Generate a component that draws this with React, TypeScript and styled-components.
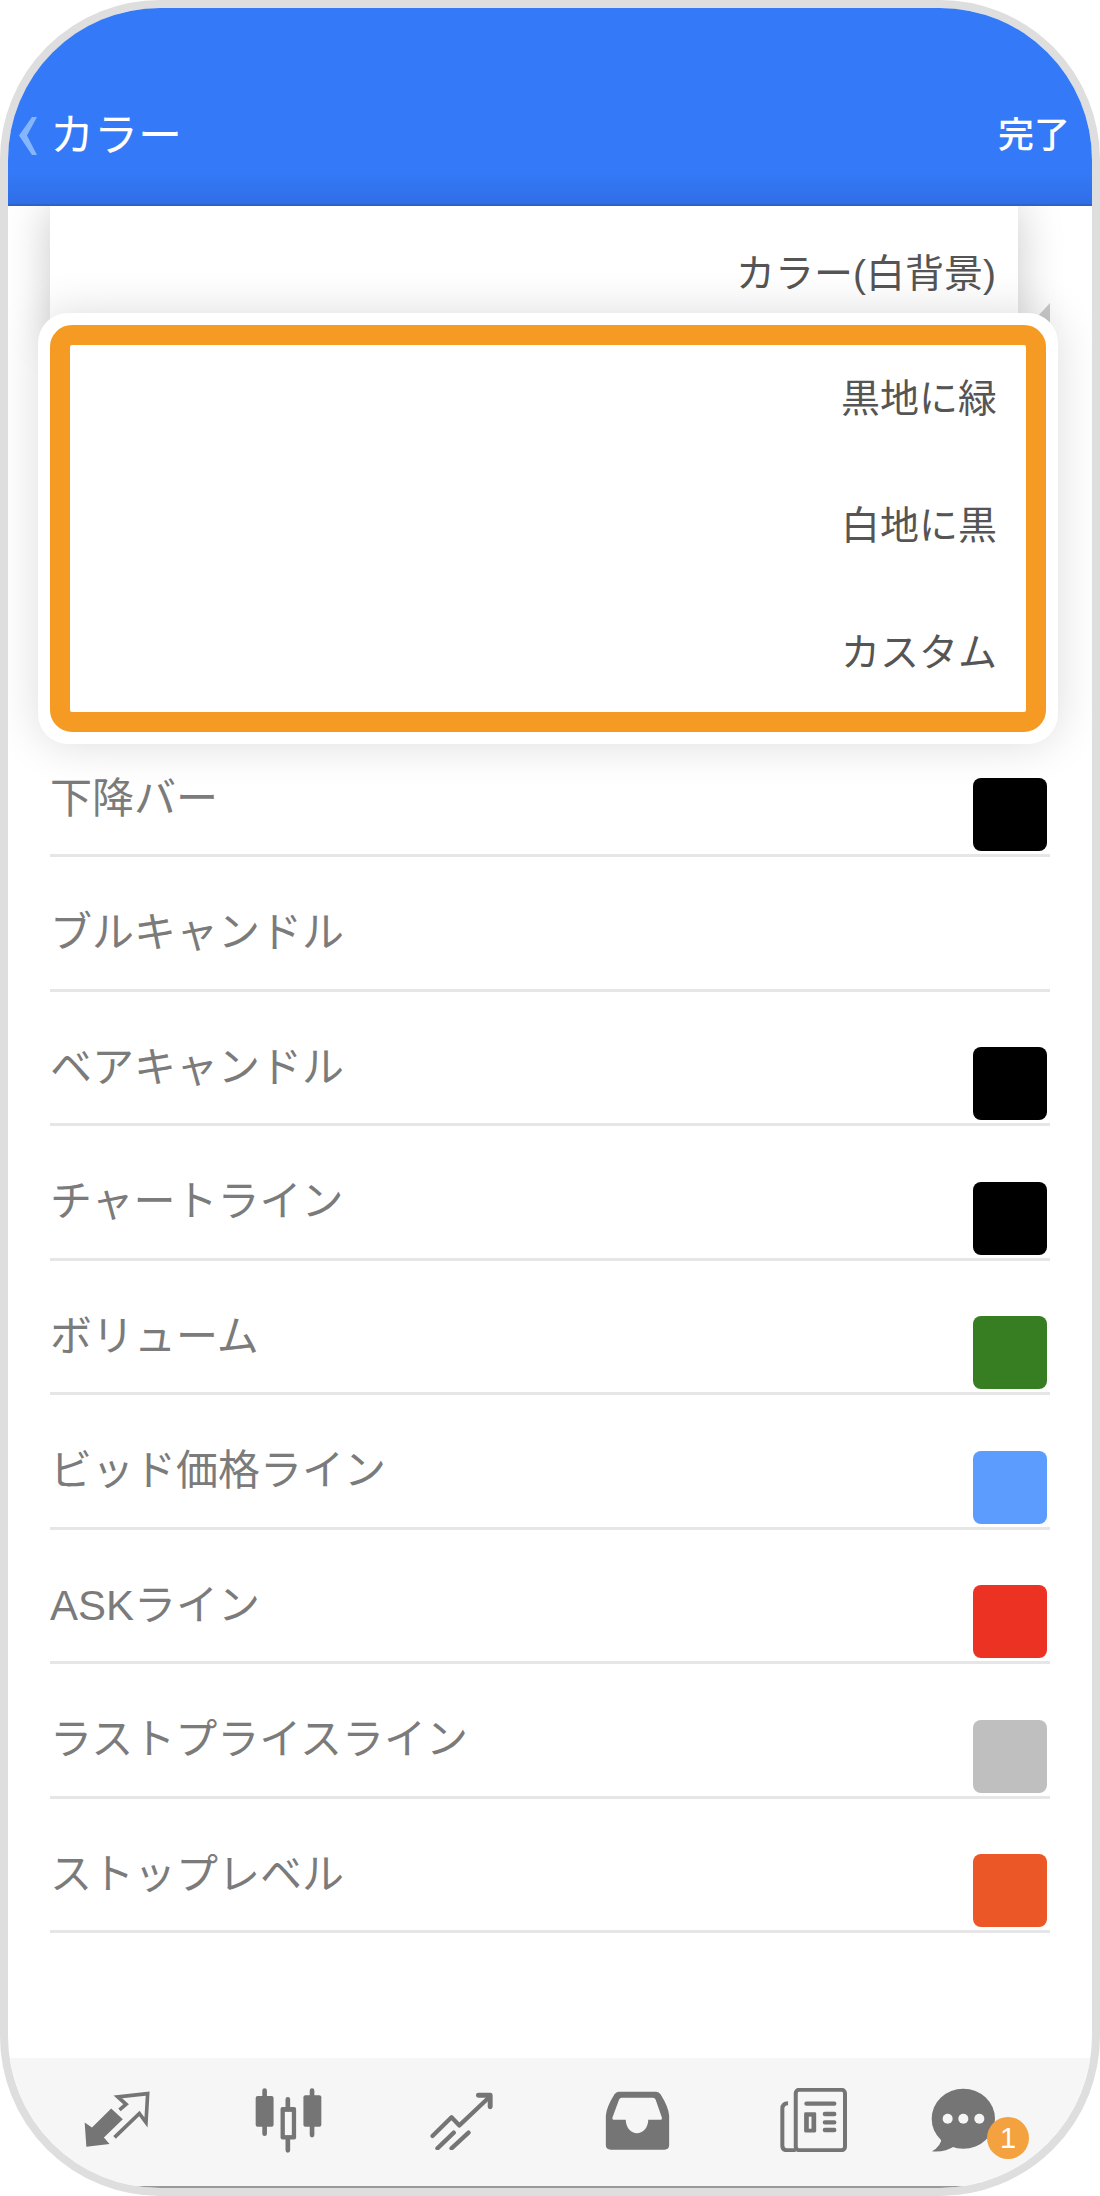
import React from 'react';
import styled, { createGlobalStyle } from 'styled-components';

const GlobalStyle = createGlobalStyle`
  html, body {
    margin: 0;
    padding: 0;
    background: #fff;
  }
  body {
    font-family: "Liberation Sans", "Noto Sans CJK JP", sans-serif;
  }
`;

const Frame = styled.div`
  position: relative;
  box-sizing: border-box;
  width: 1100px;
  height: 2196px;
  border: 8px solid #dedede;
  border-radius: 160px;
  overflow: hidden;
  display: flex;
  flex-direction: column;
  background: #fff;
`;

const Header = styled.header`
  position: relative;
  z-index: 3;
  box-sizing: border-box;
  height: 198px;
  flex: none;
  display: flex;
  align-items: flex-end;
  justify-content: space-between;
  padding: 0 22px 45px 11px;
  background: linear-gradient(#3479f7 0, #3479f7 84%, #306ee6 100%);
  border-bottom: 2px solid #2c62cc;
  color: #fff;
`;

const BackGroup = styled.div`
  display: flex;
  align-items: center;
  gap: 13px;
`;

const Title = styled.h1`
  margin: 0;
  font-size: 44px;
  line-height: 46px;
  font-weight: 400;
`;

const DoneButton = styled.span`
  font-size: 36px;
  line-height: 46px;
  font-weight: 500;
`;

const List = styled.main`
  flex: 1;
  padding: 516.8px 42px 0;
`;

const Row = styled.div`
  box-sizing: border-box;
  height: 134.5px;
  display: flex;
  justify-content: space-between;
  border-bottom: 3px solid #e6e6e6;
`;

const RowLabel = styled.span`
  padding-top: 53px;
  font-size: 42px;
  line-height: 46px;
  color: #7b7b7b;
`;

const Swatch = styled.span<{ $color: string }>`
  align-self: flex-end;
  width: 74px;
  height: 73px;
  margin: 0 3px 3px 0;
  border-radius: 8px;
  background: ${(p) => p.$color};
`;

const TopPanel = styled.div`
  position: absolute;
  z-index: 1;
  top: 198px;
  left: 42px;
  box-sizing: border-box;
  width: 968px;
  height: 130px;
  padding: 46px 22px 0 0;
  border-radius: 0 0 6px 6px;
  background: #fff;
  box-shadow: 0 0 46px rgba(0, 0, 0, 0.22);
  text-align: right;
  font-size: 39px;
  line-height: 44px;
  color: #555;
`;

const ResizeCorner = styled.svg`
  position: absolute;
  z-index: 1;
  top: 295px;
  left: 1029px;
`;

const Popup = styled.div`
  position: absolute;
  z-index: 2;
  top: 305px;
  left: 30px;
  box-sizing: border-box;
  width: 1020px;
  height: 431px;
  padding: 12px;
  border-radius: 30px;
  background: #fff;
  box-shadow: 0 0 46px rgba(0, 0, 0, 0.14);
`;

const Highlight = styled.div`
  box-sizing: border-box;
  height: 100%;
  display: flex;
  flex-direction: column;
  gap: 83px;
  padding: 32px 29px 0 0;
  border: 20px solid #f59b23;
  border-radius: 22px;
`;

const PopupItem = styled.div`
  text-align: right;
  font-size: 39px;
  line-height: 44px;
  color: #555;
`;

const TabBar = styled.nav`
  box-sizing: border-box;
  flex: none;
  height: 130px;
  display: flex;
  align-items: center;
  padding: 0 0 4px 75px;
  background: #f6f6f6;
  border-bottom: 2px solid #999;
`;

const TabIcon = styled.svg<{ $gap?: number }>`
  display: block;
  flex: none;
  margin-left: ${(p) => p.$gap ?? 0}px;
`;

const ChatTab = styled.div`
  position: relative;
  flex: none;
  margin-left: 84px;
`;

const Badge = styled.span`
  position: absolute;
  top: 29px;
  left: 56px;
  width: 42px;
  height: 42px;
  border-radius: 50%;
  background: #f3a23f;
  color: #fff;
  font-size: 29px;
  line-height: 42px;
  text-align: center;
`;

const ICON = '#757575';

const rows: { label: string; color?: string }[] = [
  { label: '下降バー', color: '#000' },
  { label: 'ブルキャンドル' },
  { label: 'ベアキャンドル', color: '#000' },
  { label: 'チャートライン', color: '#000' },
  { label: 'ボリューム', color: '#377d22' },
  { label: 'ビッド価格ライン', color: '#5b9cfe' },
  { label: 'ASKライン', color: '#ec3323' },
  { label: 'ラストプライスライン', color: '#bfbfbf' },
  { label: 'ストップレベル', color: '#ec5727' },
];

const App: React.FC = () => {
  return (
    <>
      <GlobalStyle />
      <Frame>
        <Header>
          <BackGroup>
            <svg width="18" height="38" viewBox="0 0 18 38">
              <path d="M13 0h5L8 18.500 18 38h-5L0 18.500z" fill="#85b6fb" />
            </svg>
            <Title>カラー</Title>
          </BackGroup>
          <DoneButton>完了</DoneButton>
        </Header>

        <List>
          {rows.map((row) => (
            <Row key={row.label}>
              <RowLabel>{row.label}</RowLabel>
              {row.color && <Swatch $color={row.color} />}
            </Row>
          ))}
        </List>

        <TopPanel>カラー(白背景)</TopPanel>
        <ResizeCorner width="13" height="22" viewBox="0 0 13 22">
          <path d="M13 0V22H0V14z" fill="#c8c8c8" />
        </ResizeCorner>
        <Popup>
          <Highlight>
            <PopupItem>黒地に緑</PopupItem>
            <PopupItem>白地に黒</PopupItem>
            <PopupItem>カスタム</PopupItem>
          </Highlight>
        </Popup>

        <TabBar>
          <TabIcon width="68" height="58" viewBox="35 40 205 175">
            <path d="M40 135 45 208 115 200 98 180 155 125 120 93 62 150z" fill={ICON} />
            <path
              d="M130 180 205 108 225 135 230 48 140 58 165 80 145 97"
              fill="none"
              stroke={ICON}
              strokeWidth="11"
            />
          </TabIcon>

          <TabIcon $gap={104} width="67" height="65" viewBox="556 28 202 196">
            <g stroke={ICON} strokeWidth="14" strokeLinecap="round">
              <path d="M585 36V166M655 62V216M728 36V170" />
            </g>
            <rect x="558" y="52" width="54" height="93" rx="6" fill={ICON} />
            <rect x="702" y="50" width="54" height="95" rx="6" fill={ICON} />
            <rect x="633" y="85" width="47" height="98" rx="6" fill={ICON} />
            <rect x="646" y="100" width="21" height="70" fill="#f6f6f6" />
          </TabIcon>

          <TabIcon $gap={107} width="65" height="59" viewBox="30 30 197 180">
            <g fill="none" stroke={ICON} strokeLinecap="round" strokeLinejoin="round">
              <path d="M40 167 98 110 122 135 212 50" strokeWidth="13" />
              <path d="M180 43H216V78" strokeWidth="15" />
              <path d="M55 205 105 157M98 205 150 157" strokeWidth="13" />
            </g>
          </TabIcon>

          <TabIcon $gap={111} width="65" height="59" viewBox="555 35 195 178">
            <path
              fillRule="evenodd"
              fill={ICON}
              d="M596 37H709Q717 37 722 45 747 85 748 110V198Q748 212 734 212H572Q557 212 557 198V110Q558 85 583 45 588 37 596 37ZM605 55Q599 55 597 61L577 115Q575 122 583 122H617C619 176 683 176 685 122H720Q728 122 726 115L707 61Q705 55 699 55Z"
            />
          </TabIcon>

          <TabIcon $gap={110} width="67" height="64" viewBox="28 28 200 190">
            <g fill="none" stroke={ICON}>
              <rect x="75" y="33" width="147" height="180" rx="10" strokeWidth="12" />
              <path d="M52 73Q35 73 35 90V200Q35 213 48 213H75" strokeWidth="12" />
              <path
                d="M107 74H190M162 105H190M162 130H190M162 153H190"
                strokeWidth="13"
                strokeLinecap="round"
              />
            </g>
            <rect x="100" y="100" width="36" height="60" rx="4" fill={ICON} />
            <rect x="114" y="113" width="8" height="36" fill="#f6f6f6" />
          </TabIcon>

          <ChatTab>
            <TabIcon width="65" height="65" viewBox="480 26 195 195">
              <ellipse cx="577" cy="118" rx="95" ry="90" fill={ICON} />
              <path d="M512 175Q510 200 483 216 520 220 552 200z" fill={ICON} />
              <circle cx="530" cy="118" r="15" fill="#f6f6f6" />
              <circle cx="577" cy="118" r="15" fill="#f6f6f6" />
              <circle cx="625" cy="118" r="15" fill="#f6f6f6" />
            </TabIcon>
            <Badge>1</Badge>
          </ChatTab>
        </TabBar>
      </Frame>
    </>
  );
};

export default App;
